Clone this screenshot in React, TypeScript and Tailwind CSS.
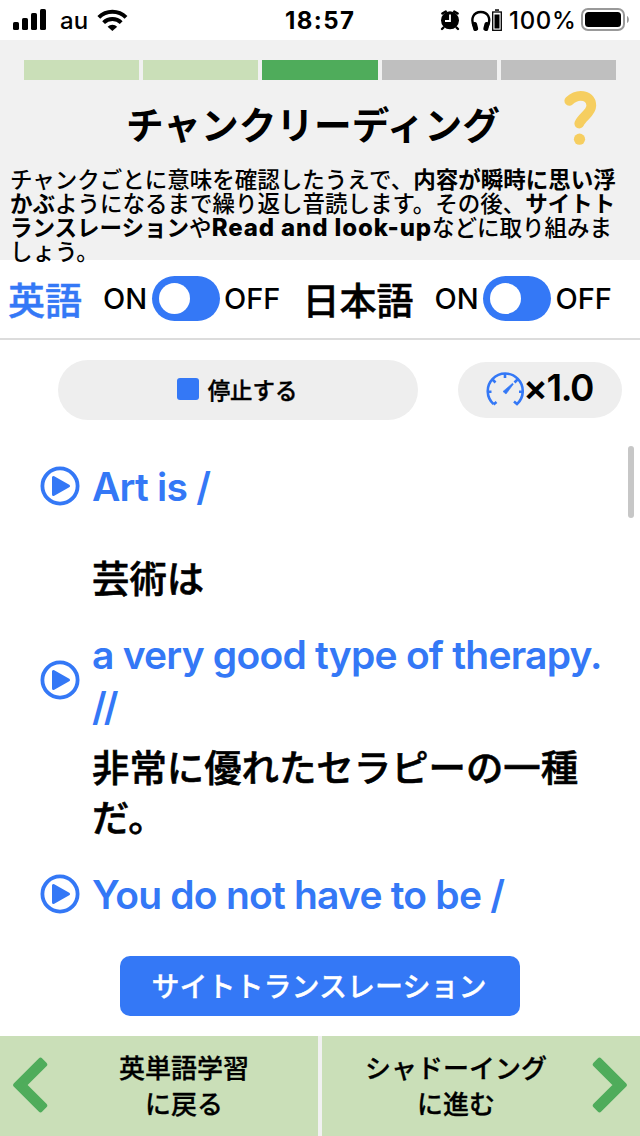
import clsx from "clsx";

const StatusBar = () => {
  return (
    <div className="flex h-10 items-center bg-white font-['Inter'] text-black">
      <svg className="ml-3 h-10 w-[35px]" viewBox="12 0 35 40">
        <rect x="13" y="22" width="6" height="8" rx="1.6" />
        <rect x="22" y="18" width="6" height="12" rx="1.6" />
        <rect x="31" y="13" width="6" height="17" rx="1.6" />
        <rect x="40" y="9" width="6" height="21" rx="1.6" />
      </svg>
      <span className="ml-[13px] w-9 pt-0.5 text-[24px] font-medium leading-10">au</span>
      <svg
        className="h-10 w-8"
        viewBox="96 0 32 40"
        fill="none"
        stroke="black"
        strokeWidth="4"
      >
        <path d="M98.8 17.3a19.3 19.3 0 0 1 27.2 0" />
        <path d="M103.6 22.6a12.6 12.6 0 0 1 17.6 0" />
        <path d="M107.6 26.7a7 7 0 0 1 9.6 0L112.4 31z" fill="black" stroke="none" />
      </svg>
      <span className="ml-[157px] w-[76px] whitespace-nowrap pt-0.5 text-[24px] font-bold leading-10 tracking-[1.4px]">
        18:57
      </span>
      <svg className="ml-[79px] h-10 w-5" viewBox="440 0 20 40">
        <circle cx="450" cy="20.3" r="9" />
        <path
          d="M442.3 13.5l3.5-2M457.7 13.5l-3.5-2M443.5 27.5l-1.5 1.5M456.5 27.5l1.5 1.5"
          stroke="black"
          strokeWidth="2.4"
          strokeLinecap="round"
        />
        <path d="M450 14.5V21h-5" fill="none" stroke="white" strokeWidth="1.8" />
      </svg>
      <svg className="ml-[11px] h-10 w-8" viewBox="471 0 32 40">
        <path
          d="M474.3 27c-4.5-8.5-.5-15 6.5-15s11 6.5 6.5 15"
          fill="none"
          stroke="black"
          strokeWidth="2.4"
        />
        <rect x="472.5" y="22" width="5" height="9" rx="2" transform="rotate(-14 475 26)" />
        <rect x="484" y="22" width="5" height="9" rx="2" transform="rotate(14 486.5 26)" />
        <rect x="492.7" y="12" width="8.6" height="18.3" fill="none" stroke="black" strokeWidth="1.3" />
        <rect x="494.5" y="14.5" width="5" height="14" />
        <rect x="495" y="9.3" width="4" height="1.5" />
      </svg>
      <span className="ml-[6px] w-[68px] whitespace-nowrap pt-0.5 text-[24px] font-medium leading-10 tracking-[0.7px]">
        100%
      </span>
      <svg className="ml-[4px] h-10 w-[50px]" viewBox="581 0 50 40">
        <rect x="582" y="9" width="42" height="21" rx="6" fill="none" stroke="#999" strokeWidth="2" />
        <rect x="585" y="12" width="36" height="15" rx="3.5" />
        <path d="M627 16c2.5 1 2.5 6 0 7z" fill="#999" />
      </svg>
    </div>
  );
};

const steps = [
  "bg-[#cadfb8]",
  "bg-[#cadfb8]",
  "bg-[#4fac5b]",
  "bg-[#bfbfbf]",
  "bg-[#bfbfbf]",
];

const Header = () => {
  return (
    <header className="h-[220px] bg-[#f1f1f1] pt-5">
      <div className="mx-6 grid h-5 grid-cols-5 gap-1">
        {steps.map((color, i) => (
          <div key={i} className={color} />
        ))}
      </div>
      <div className="flex h-[88px] items-center">
        <h1 className="ml-[126px] w-[436px] whitespace-nowrap pt-0.5 text-[37.7px] font-bold leading-[88px]">
          チャンクリーディング
        </h1>
        <svg className="-mt-3 h-14 w-9" viewBox="562 90 36 56">
          <path
            d="M569.3 100.8C573 97.5 576 95.8 580.5 95.8C587.5 95.8 591.3 99.8 591.3 105.5C591.3 113 582.5 116.5 579.3 123.5"
            fill="none"
            stroke="#f6ce60"
            strokeWidth="9.8"
            strokeLinecap="round"
          />
          <circle cx="579.5" cy="139.2" r="5.6" fill="#f6ce60" />
        </svg>
      </div>
      <p className="ml-[10px] whitespace-nowrap text-[22.5px] font-medium leading-6">
        チャンクごとに意味を確認したうえで、<b>内容が瞬時に思い浮</b>
        <br />
        <b>かぶ</b>ようになるまで繰り返し音読します。その後、<b>サイトト</b>
        <br />
        <b>ランスレーション</b>や
        <b className="text-[24px] font-extrabold leading-none tracking-[0.9px]">Read and look-up</b>
        などに取り組みま
        <br />
        しょう。
      </p>
    </header>
  );
};

type LanguageSwitchProps = {
  label: string;
  labelClass: string;
};
const LanguageSwitch = ({ label, labelClass }: LanguageSwitchProps) => {
  return (
    <div className="flex items-center whitespace-nowrap font-medium">
      <span
        className={clsx(
          "pt-1.5 text-[37px] leading-[74px] [-webkit-text-stroke:0.5px]",
          labelClass
        )}
      >
        {label}
      </span>
      <span className="w-[49px] text-[29px] leading-[76px]">ON</span>
      <button className="-mt-0.5 flex h-[45px] w-[68px] items-center rounded-full bg-[#3478f6] pl-[7px]">
        <span className="h-[31px] w-[31px] rounded-full bg-white" />
      </button>
      <span className="ml-1 text-[29px] leading-[76px]">OFF</span>
    </div>
  );
};

const Controls = () => {
  return (
    <div className="flex h-[100px] items-center pl-[58px]">
      <button className="flex h-[60px] w-[360px] items-center justify-center rounded-full bg-[#eee] pr-0.5 text-[22.4px] font-medium [-webkit-text-stroke:0.4px]">
        <span className="-mt-0.5 mr-[9px] h-[22px] w-[22px] rounded-[3px] bg-[#3478f6]" />
        <span className="pt-0.5">停止する</span>
      </button>
      <button className="ml-10 flex h-14 w-[164px] items-center rounded-full bg-[#eee] pl-[27px]">
        <svg
          className="h-10 w-10 shrink-0"
          viewBox="485 370 40 40"
          fill="none"
          stroke="#3478f6"
          strokeWidth="2.6"
        >
          <path d="M493.5 404.5l3-2.5M493.5 404a17.5 17.5 0 1 1 23.5 0l-3-2.5" />
          <path d="M487.5 391.8h4M519 391.8h4M505 374v4M492.5 379.5l3 3M517.5 379.5l-3 3" />
          <path d="M503 391.5L512.5 383.3L513.3 384.2L506 394z" fill="#3478f6" strokeWidth="0.6" />
        </svg>
        <span className="-ml-0.5 -mt-1.5 whitespace-nowrap text-[37px] font-semibold leading-none tracking-[-1.4px]">
          ×1.0
        </span>
      </button>
    </div>
  );
};

const PlayIcon = () => {
  return (
    <svg className="ml-10 mr-3 h-10 w-10 shrink-0" viewBox="0 0 40 40">
      <circle cx="20" cy="20" r="17.6" fill="none" stroke="#3478f6" strokeWidth="3.8" />
      <path
        d="M13.5 11.5v17L28.5 20z"
        fill="#3478f6"
        stroke="#3478f6"
        strokeWidth="3"
        strokeLinejoin="round"
      />
    </svg>
  );
};

const english =
  "whitespace-nowrap pt-[2px] text-[39px] font-semibold leading-[52px] tracking-[-0.78px] text-[#3478f6]";
const japanese =
  "ml-[92px] whitespace-nowrap text-[37.4px] font-medium leading-[50px] [-webkit-text-stroke:0.6px]";

const ChunkList = () => {
  return (
    <div className="relative h-[516px]">
      <div className="flex h-[92px] items-center">
        <PlayIcon />
        <p className={english}>Art is /</p>
      </div>
      <p className={clsx(japanese, "mt-[23px]")}>芸術は</p>
      <div className="mt-[23px] flex h-[104px] items-center">
        <PlayIcon />
        <p className={english}>
          a very good type of therapy.
          <br />
          <span className="tracking-[-3px]">//</span>
        </p>
      </div>
      <p className={clsx(japanese, "mt-[12px]")}>
        非常に優れたセラピーの一種
        <br />
        だ。
      </p>
      <div className="mt-[24px] flex h-[52px] items-center">
        <PlayIcon />
        <p className={english}>You do not have to be /</p>
      </div>
      <div className="absolute right-[6px] top-[6px] h-[72px] w-[6px] rounded-full bg-[#c7c7c7]" />
    </div>
  );
};

const Chevron = ({ className }: { className?: string }) => {
  return (
    <svg
      className={clsx("-mt-0.5 h-14 w-9 shrink-0", className)}
      viewBox="12 1057 36 56"
      fill="#4fac5b"
      stroke="#4fac5b"
      strokeWidth="5"
      strokeLinejoin="round"
    >
      <path d="M15.7 1085L40.5 1060.2L44.7 1064.4L24.1 1085L44.7 1105.6L40.5 1109.8z" />
    </svg>
  );
};

export default function App() {
  return (
    <div className="h-[1136px] w-[640px] overflow-hidden bg-white font-['Inter','Noto_Sans_CJK_JP',sans-serif] text-black">
      <StatusBar />
      <Header />
      <div className="flex h-20 items-center border-b-2 border-[#dcdcdc] pl-2">
        <LanguageSwitch label="英語" labelClass="w-[95px] text-[#3478f6]" />
        <div className="ml-[22px]">
          <LanguageSwitch label="日本語" labelClass="w-[132px]" />
        </div>
      </div>
      <Controls />
      <ChunkList />
      <button className="mx-auto flex h-[60px] w-[400px] items-center justify-center whitespace-nowrap rounded-[10px] bg-[#3478f6] pr-0.5 pt-0.5 text-[28px] font-medium text-white [-webkit-text-stroke:0.3px]">
        サイトトランスレーション
      </button>
      <div className="mt-5 flex h-[100px] justify-between bg-[#f1f1f1]">
        <button className="flex w-[318px] items-center bg-[#cadfb8] pl-3 text-[26px] font-medium leading-9 [-webkit-text-stroke:0.3px]">
          <Chevron />
          <span className="ml-[61px] w-[150px] pt-[2px]">
            英単語学習
            <br />
            に戻る
          </span>
        </button>
        <button className="flex w-[318px] items-center justify-end bg-[#cadfb8] pr-3 text-[26px] font-medium leading-9 [-webkit-text-stroke:0.3px]">
          <span className="mr-[31px] w-[210px] pt-[2px]">
            シャドーイング
            <br />
            に進む
          </span>
          <Chevron className="rotate-180" />
        </button>
      </div>
    </div>
  );
}
